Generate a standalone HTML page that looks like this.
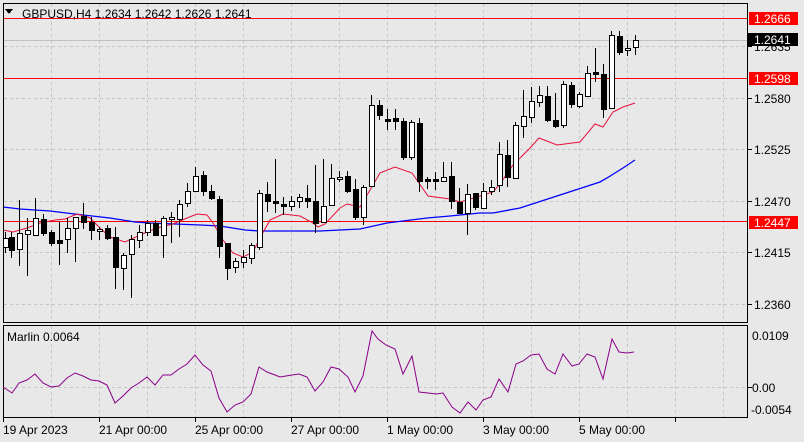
<!DOCTYPE html>
<html><head><meta charset="utf-8"><style>
html,body{margin:0;padding:0;background:#e8e8e8;}
svg{display:block;font-family:"Liberation Sans",sans-serif;font-size:12px;}
</style></head><body>
<svg id="s" width="804" height="442" viewBox="0 0 804 442" xmlns="http://www.w3.org/2000/svg" shape-rendering="crispEdges">
<rect width="804" height="442" fill="#e8e8e8"/>
<g id="grid" stroke="#c4c4c4" stroke-dasharray="3,3" stroke-width="1"></g>
<line x1="3" y1="40.5" x2="748" y2="40.5" stroke="#c0c0c0"/>
<line x1="3" y1="18.5" x2="748" y2="18.5" stroke="#ff0000"/>
<line x1="3" y1="78.5" x2="748" y2="78.5" stroke="#ff0000"/>
<line x1="3" y1="221.5" x2="748" y2="221.5" stroke="#ff0000"/>
<g shape-rendering="auto" fill="none">
<polyline stroke="#0000ff" stroke-width="1.3" points="3,207 20,209 50,211 83,215 110,218 135,222 150,223 200,225 220,226 245,230 260,231 320,231 360,229 387,223 427,218 450,216 480,213 493,213 520,208 560,195 600,182 607,178 623,168 635,160"/>
<polyline stroke="#e8103a" stroke-width="1" points="3,230 13,232 27,228 40,223 55,220 65,219 77,214 90,218 100,228 110,237 125,242 140,235 157,228 173,224 187,218 197,214 207,215 213,223 223,240 233,253 243,257 253,252 260,238 270,220 283,214 300,216 313,223 318,227 325,224 340,208 347,204 360,207 380,173 395,167 412,173 428,196 450,199 460,202 477,197 493,192 500,184 513,165 530,148 539,138 557,145 580,142 595,124 603,127 613,112 623,107 635,103"/>
</g>
<g id="candles"></g>
<!-- borders -->
<rect x="3.5" y="3.5" width="744" height="319" fill="none" stroke="#000"/>
<rect x="3.5" y="325.5" width="744" height="92" fill="none" stroke="#000"/>
<!-- indicator -->
<polyline shape-rendering="auto" fill="none" stroke="#8b008b" stroke-width="1" points="3,387 12,393 19,383 27,380 35,374 43,383 51,387 59,386 67,378 75,373 83,376 91,380 99,381 107,385 115,403 123,396 131,388 139,383 147,377 155,385 163,375 171,375 179,369 187,364 195,355 203,365 211,371 219,398 227,412 235,405 243,402 251,394 259,367 267,372 275,375 280,377 292,375 299,374 307,377 315,391 323,382 331,367 339,369 348,377 355,392 363,376 372,331 378,339 386,345 395,349 403,374 412,356 419,392 428,393 436,394 443,393 452,407 460,413 468,402 476,410 483,400 491,397 499,379 508,392 516,364 523,361 531,355 539,354 547,369 555,374 563,354 572,366 579,364 587,354 595,357 603,379 612,339 619,352 627,353 634,352"/>
<text x="7" y="341" fill="#000">Marlin 0.0064</text>
<!-- header -->
<polygon points="5,9 13,9 9,14" fill="#000"/>
<text x="22" y="18" fill="#000">GBPUSD,H4  1.2634 1.2642 1.2626 1.2641</text>
<!-- right axis -->
<g fill="#000" font-size="12">
<line x1="748" y1="46.5" x2="752" y2="46.5" stroke="#000"/>
<text x="754" y="51">1.2635</text>
<line x1="748" y1="98.5" x2="752" y2="98.5" stroke="#000"/>
<text x="754" y="103">1.2580</text>
<line x1="748" y1="149.5" x2="752" y2="149.5" stroke="#000"/>
<text x="754" y="154">1.2525</text>
<line x1="748" y1="201.5" x2="752" y2="201.5" stroke="#000"/>
<text x="754" y="206">1.2470</text>
<line x1="748" y1="252.5" x2="752" y2="252.5" stroke="#000"/>
<text x="754" y="257">1.2415</text>
<line x1="748" y1="304.5" x2="752" y2="304.5" stroke="#000"/>
<text x="754" y="309">1.2360</text>
<text x="752" y="340">0.0109</text>
<line x1="748" y1="387.5" x2="752" y2="387.5" stroke="#000"/>
<text x="752" y="392">0.00</text>
<text x="751" y="414">-0.0054</text>
</g>
<rect x="749" y="12" width="49" height="13" fill="#ff0000"/>
<text x="754" y="23" fill="#fff">1.2666</text>
<rect x="748" y="33" width="50" height="13" fill="#000"/>
<text x="754" y="44" fill="#fff">1.2641</text>
<rect x="749" y="72" width="49" height="13" fill="#ff0000"/>
<text x="754" y="83" fill="#fff">1.2598</text>
<rect x="749" y="216" width="49" height="13" fill="#ff0000"/>
<text x="754" y="227" fill="#fff">1.2447</text>
<!-- x axis -->
<g fill="#000">
<text x="3" y="434">19 Apr 2023</text>
<text x="99" y="434">21 Apr 00:00</text>
<text x="195" y="434">25 Apr 00:00</text>
<text x="291" y="434">27 Apr 00:00</text>
<text x="387" y="434">1 May 00:00</text>
<text x="483" y="434">3 May 00:00</text>
<text x="579" y="434">5 May 00:00</text>
</g>
<g id="ticks" stroke="#000"></g>
</svg>
<script>
var NS="http://www.w3.org/2000/svg";
function el(p,t,a){var e=document.createElementNS(NS,t);for(var k in a)e.setAttribute(k,a[k]);p.appendChild(e);return e;}
var g=document.getElementById('grid');
for(var x=51;x<748;x+=48){el(g,'line',{x1:x+.5,y1:4,x2:x+.5,y2:322});el(g,'line',{x1:x+.5,y1:326,x2:x+.5,y2:417});}
[46,98,149,201,252,304].forEach(function(y){el(g,'line',{x1:4,y1:y+.5,x2:747,y2:y+.5});});
el(g,'line',{x1:4,y1:387.5,x2:747,y2:387.5});
var tk=document.getElementById('ticks');
for(var x=3;x<748;x+=96){el(tk,'line',{x1:x+.5,y1:418,x2:x+.5,y2:422});}
var C=[
['w',238,247,232,253],['b',237,250,232,258],['w',233,249,200,266],['w',230,234,218,276],['w',218,235,198,235],
['b',219,233,214,236],['b',232,243,230,246],['b',240,243,222,265],['w',228,239,218,253],['w',217,228,217,262],
['b',216,222,203,229],['b',222,230,217,240],['w',229,231,227,240],['b',228,238,225,240],['b',237,267,227,289],
['w',255,268,253,290],['w',239,254,235,298],['w',232,240,225,248],['w',223,232,220,236],['b',223,235,220,236],
['w',218,235,216,258],['w',217,219,212,243],['w',204,219,200,237],['w',191,203,183,207],['w',176,191,167,191],
['b',175,191,171,196],['b',191,198,185,200],['b',199,246,196,258],['b',243,268,243,280],['w',261,267,258,273],
['w',257,262,250,268],['w',245,258,243,264],['w',193,247,190,250],['b',194,201,182,212],['b',201,203,159,213],
['b',204,206,197,215],['w',201,206,196,211],['w',197,201,194,208],['b',198,201,185,208],['b',201,223,165,233],
['w',206,222,159,222],['w',178,205,164,182],['w',177,179,171,182],['b',176,191,171,193],['b',189,217,179,220],
['w',187,217,185,225],['w',105,186,95,186],['b',105,115,100,120],['b',119,121,109,130],['b',118,121,109,130],
['b',121,157,118,160],['w',122,157,120,160],['b',123,181,118,192],['b',179,181,177,189],['b',179,181,172,190],
['w',177,181,162,181],['b',176,201,162,209],['b',202,213,188,213],['w',194,213,184,235],['b',193,207,193,210],
['w',191,208,183,208],['w',187,191,180,195],['w',154,185,142,192],['b',155,177,140,187],['w',125,178,122,178],
['w',116,126,90,138],['w',101,117,87,123],['w',95,102,86,107],['b',96,120,86,122],['b',120,126,93,128],
['w',84,125,81,128],['b',85,104,82,108],['w',94,106,92,108],['w',73,96,66,97],['b',72,74,48,82],
['b',74,109,64,118],['w',35,108,31,108],['b',36,52,31,55],['w',48,50,40,56],['w',40,47,35,55]];
var cg=document.getElementById('candles');
C.forEach(function(c,i){var x=3+8*i;if(x<4)x=5;
el(cg,'line',{x1:x+.5,y1:c[3],x2:x+.5,y2:c[4],stroke:'#000'});
var h=Math.max(c[2]-c[1],1);
if(c[0]=='b'){el(cg,'rect',{x:x-2,y:c[1],width:6,height:h+1,fill:'#000'});}
else{el(cg,'rect',{x:x-1.5,y:c[1]+.5,width:5,height:h,fill:'#fff',stroke:'#000'});}
});
</script>
</body></html>
